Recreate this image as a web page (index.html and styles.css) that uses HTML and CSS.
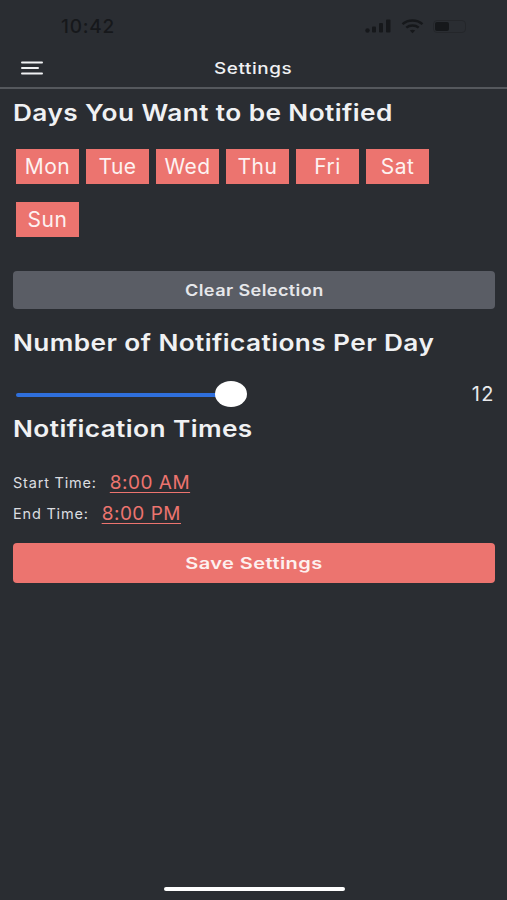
FILE: index.html
```html
<!DOCTYPE html>
<html lang="en">
<head>
    <meta charset="UTF-8">
    <meta name="viewport" content="width=device-width, initial-scale=1.0">
    <title>Settings</title>
    <link rel="stylesheet" href="styles.css">
</head>
<body>

<div class="status-bar">
    <span class="clock">10:42</span>
    <div class="status-icons">
        <svg width="27" height="14" viewBox="0 0 27 14" fill="#16181b">
            <circle cx="2.5" cy="11.5" r="2.2"/>
            <rect x="7" y="7.5" width="4" height="6" rx="1"/>
            <rect x="14" y="4" width="4" height="9.5" rx="1"/>
            <rect x="21" y="0.5" width="4.5" height="13" rx="1"/>
        </svg>
        <svg width="23" height="15" viewBox="0 0 23 15" fill="none" stroke="#16181b" stroke-width="2.4">
            <path d="M1.5 5.2 C7 0.2 16 0.2 21.5 5.2"/>
            <path d="M5.3 8.6 C8.6 5.7 14.4 5.7 17.7 8.6"/>
            <path d="M11.5 14.2 L8.8 11.6 C10.3 10.5 12.7 10.5 14.2 11.6 Z" fill="#16181b" stroke="none"/>
        </svg>
        <div class="battery"><div class="battery-level"></div></div>
    </div>
</div>

<div class="nav-bar">
    <button class="menu-button" aria-label="Menu">
        <svg width="22" height="14" viewBox="0 0 22 14" stroke="#f0f1f3" stroke-width="2" stroke-linecap="round">
            <path d="M1 1.5H21"/>
            <path d="M1 7H17"/>
            <path d="M1 12.5H21"/>
        </svg>
    </button>
    <span class="nav-title">Settings</span>
</div>

<div class="content">
    <h2 class="first-heading">Days You Want to be Notified</h2>

    <div class="days">
        <button class="day">Mon</button>
        <button class="day">Tue</button>
        <button class="day">Wed</button>
        <button class="day">Thu</button>
        <button class="day">Fri</button>
        <button class="day">Sat</button>
        <button class="day">Sun</button>
    </div>

    <button class="wide-button clear-button"><span class="clear-text">Clear Selection</span></button>

    <h2 class="count-heading">Number of Notifications Per Day</h2>

    <div class="slider-row">
        <div class="slider">
            <div class="slider-track"></div>
            <div class="slider-thumb"></div>
        </div>
        <span class="slider-value">12</span>
    </div>

    <h2 class="times-heading">Notification Times</h2>

    <div class="time-row start-row">
        <span class="time-label">Start Time:</span>
        <a class="time-link" href="#">8:00 AM</a>
    </div>
    <div class="time-row end-row">
        <span class="time-label">End Time:</span>
        <a class="time-link" href="#">8:00 PM</a>
    </div>

    <button class="wide-button save-button"><span class="save-text">Save Settings</span></button>
</div>

<div class="home-indicator"></div>

</body>
</html>
```

FILE: styles.css
```css
body {
    font-family: Inter, "Liberation Sans", sans-serif;
    background-color: #2a2d32;
    color: #f0f1f3;
    margin: 0;
    padding: 0;
    height: 900px;
    overflow: hidden;
}
button {
    font-family: inherit;
    border: none;
    cursor: pointer;
    padding: 0;
}
.status-bar {
    height: 44px;
    box-sizing: border-box;
    padding: 8px 41px 0 61px;
    display: flex;
    justify-content: space-between;
    align-items: center;
}
.clock {
    color: #16181b;
    font-size: 19px;
    font-weight: 500;
    letter-spacing: 0.8px;
}
.status-icons {
    display: flex;
    align-items: center;
    gap: 9px;
}
.battery {
    width: 33px;
    height: 13px;
    box-sizing: border-box;
    border: 1px solid #24262a;
    border-radius: 4px;
    padding: 1px;
}
.battery-level {
    width: 14px;
    height: 9px;
    background-color: #16181b;
    border-radius: 2px;
}
.nav-bar {
    height: 45px;
    box-sizing: border-box;
    border-bottom: 2px solid #55585d;
    display: flex;
    align-items: center;
    justify-content: center;
    position: relative;
}
.menu-button {
    position: absolute;
    left: 21px;
    top: 17px;
    background: none;
    line-height: 0;
}
.nav-title {
    display: inline-block;
    margin-top: 4px;
    font-size: 16px;
    font-weight: 500;
    letter-spacing: 0.5px;
    transform: scaleX(1.18);
}
.content {
    padding: 0 12px 0 13px;
}
h2 {
    width: fit-content;
    font-size: 22.5px;
    font-weight: 600;
    line-height: 28px;
    letter-spacing: 0.35px;
    color: #f0f1f3;
    margin: 0;
    transform: scaleX(1.166);
    transform-origin: left center;
}
.first-heading {
    margin-top: 10px;
}
.days {
    display: flex;
    flex-wrap: wrap;
    gap: 18px 7px;
    margin: 22px 0 0 3px;
}
.day {
    width: 63px;
    height: 35px;
    background-color: #ec746f;
    color: #fdf2f1;
    font-size: 21px;
    letter-spacing: 0.5px;
}
.wide-button {
    display: block;
    width: 100%;
    border-radius: 4px;
    font-size: 16px;
    font-weight: 600;
    letter-spacing: 0.35px;
}
.clear-text {
    display: inline-block;
    transform: scaleX(1.13);
}
.save-text {
    display: inline-block;
    transform: scaleX(1.25);
}
.clear-button {
    height: 38px;
    margin-top: 34px;
    background-color: #5a5d65;
    color: #e6e7ea;
}
.count-heading {
    margin-top: 20px;
}
.slider-row {
    display: flex;
    justify-content: space-between;
    align-items: center;
    height: 34px;
    margin-top: 20px;
}
.slider {
    position: relative;
    width: 231px;
    height: 26px;
    margin-left: 3px;
}
.slider-track {
    position: absolute;
    left: 0;
    right: 16px;
    top: 12px;
    height: 4px;
    border-radius: 2px;
    background-color: #2f6fdc;
}
.slider-thumb {
    position: absolute;
    right: 0;
    top: 0;
    width: 32px;
    height: 26px;
    border-radius: 50%;
    background-color: #ffffff;
}
.slider-value {
    font-size: 20px;
    letter-spacing: 1.5px;
    color: #e8e9ec;
}
.times-heading {
    margin-top: 4px;
}
.time-row {
    display: flex;
    align-items: center;
    height: 24px;
}
.start-row {
    margin-top: 27px;
    gap: 13px;
}
.end-row {
    margin-top: 7px;
    gap: 13px;
}
.time-label {
    font-size: 14.5px;
    letter-spacing: 0.8px;
    color: #dcdde0;
}
.time-link {
    font-size: 19px;
    letter-spacing: 0.5px;
    color: #ec746f;
    text-underline-offset: 3px;
}
.save-button {
    height: 40px;
    margin-top: 18px;
    background-color: #ec746f;
    color: #fdf0ef;
}
.home-indicator {
    position: absolute;
    left: 164px;
    top: 887px;
    width: 181px;
    height: 4px;
    border-radius: 2px;
    background-color: #ffffff;
}
```
